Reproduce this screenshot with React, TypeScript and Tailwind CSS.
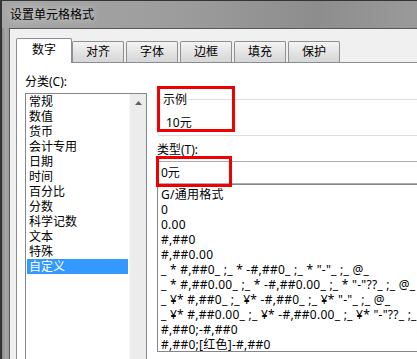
const categories = [
  "常规",
  "数值",
  "货币",
  "会计专用",
  "日期",
  "时间",
  "百分比",
  "分数",
  "科学记数",
  "文本",
  "特殊",
  "自定义",
];

const formats = [
  "G/通用格式",
  "0",
  "0.00",
  "#,##0",
  "#,##0.00",
  '_ * #,##0_ ;_ * -#,##0_ ;_ * "-"_ ;_ @_',
  '_ * #,##0.00_ ;_ * -#,##0.00_ ;_ * "-"??_ ;_ @_',
  '_ ¥* #,##0_ ;_ ¥* -#,##0_ ;_ ¥* "-"_ ;_ @_',
  '_ ¥* #,##0.00_ ;_ ¥* -#,##0.00_ ;_ ¥* "-"??_ ;_ @_',
  "#,##0;-#,##0",
  "#,##0;[红色]-#,##0",
];

const tabs = ["对齐", "字体", "边框", "填充", "保护"];

const App = () => {
  return (
    <div className="relative w-[417px] h-[359px] overflow-hidden bg-[#343434] pt-[1px] pl-[2px] font-['Noto_Sans','Noto_Sans_CJK_SC',sans-serif] text-[12px] text-black">
      <div className="flex flex-col h-full w-[520px] bg-[linear-gradient(90deg,#a6a6a6_0%,#9c9c9c_35%,#8d8d8d_60%,#9a9a9a_80%,#a4a4a4_100%)]">
        {/* 标题栏 */}
        <div className="h-[27px] flex items-center pl-[8px] shrink-0">
          <span className="leading-[15px] [text-shadow:0_0_8px_rgba(255,255,255,0.8)]">设置单元格格式</span>
        </div>

        <div className="flex flex-1 min-h-0">
          <div className="w-[7px] shrink-0 bg-[linear-gradient(90deg,#8a8a8a,#a8a8a8_50%,#9c9c9c)]" />

          {/* 对话框 */}
          <div className="flex-1 border-l border-t border-[#5a5a5a] bg-[#f0f0f0] pl-[6px] pt-[9px] flex flex-col">
            <div className="flex items-end h-[24px] shrink-0">
              <div className="relative z-10 w-[56px] h-[25px] -mb-px bg-white border border-b-0 border-[#898c95] rounded-t-[2px] flex items-center justify-center pb-[2px]">
                数字
              </div>
              <div className="flex gap-[2px]">
                {tabs.map((t) => (
                  <div
                    key={t}
                    className="w-[52px] h-[21px] border border-b-0 border-[#8e8f8f] rounded-t-[2px] bg-[linear-gradient(180deg,#f4f4f4,#e4e4e4_50%,#d6d6d6)] flex items-center justify-center"
                  >
                    {t}
                  </div>
                ))}
              </div>
            </div>

            {/* 标签页内容 */}
            <div className="flex-1 bg-white border-t border-l border-[#898c95] pl-[8px] pt-[11px] flex">
              <div className="w-[122px] shrink-0 flex flex-col">
                <div className="leading-[15px] h-[15px]">分类(C):</div>
                <div className="mt-[4px] h-[300px] border border-[#828790] flex">
                  <div className="flex-1">
                    {categories.map((c) => (
                      <div
                        key={c}
                        className={
                          c === "自定义"
                            ? "h-[15px] leading-[15px] mx-[1px] pl-[2px] bg-[#3399ff] text-white"
                            : "h-[15px] leading-[15px] mx-[1px] pl-[2px]"
                        }
                      >
                        {c}
                      </div>
                    ))}
                  </div>
                  <div className="w-[17px] bg-[#ececec] border-l border-[#f7f7f7] flex justify-center pt-[7px]">
                    <svg width="7" height="4" viewBox="0 0 7 4">
                      <path d="M3.5 0L7 4H0z" fill="#606060" />
                    </svg>
                  </div>
                </div>
              </div>

              <div className="ml-[10px] w-[300px] shrink-0 flex flex-col">
                <fieldset className="mt-[18px] border border-[#d5dfe5] rounded-[3px] pb-[5px]">
                  <legend className="ml-[4px] px-[1px] leading-[15px]">示例</legend>
                  <div className="mt-[8px] pl-[8px] leading-[15px]">10元</div>
                </fieldset>

                <div className="mt-[6px] leading-[15px] h-[15px]">类型(T):</div>
                <div className="mt-[4px] h-[23px] border border-[#abadb3] pl-[3px] flex items-center">
                  0元
                </div>
                <div className="h-[168px] border border-[#828790] pl-[3px] pt-[2px] overflow-hidden">
                  {formats.map((f) => (
                    <div key={f} className="h-[15px] leading-[15px] whitespace-pre tracking-[0.25px]">
                      {f}
                    </div>
                  ))}
                </div>
              </div>
            </div>
          </div>
        </div>
      </div>

      {/* 红色标注框 */}
      <div className="absolute left-[157px] top-[86px] w-[78px] h-[46px] border-[3px] border-[#f00000]" />
      <div className="absolute left-[156px] top-[156px] w-[76px] h-[31px] border-[3px] border-[#f00000]" />
    </div>
  );
};

export default App;
